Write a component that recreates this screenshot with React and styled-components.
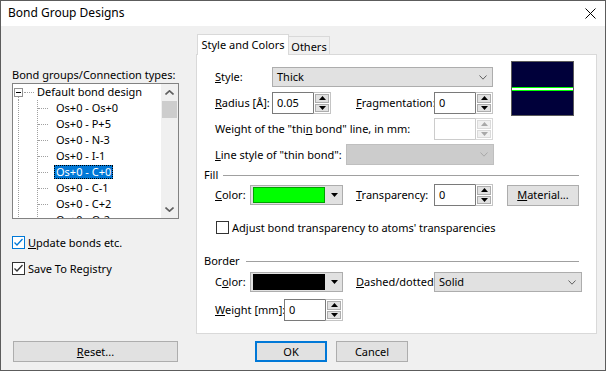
import React from 'react'
import styled, { createGlobalStyle } from 'styled-components'

const GlobalStyle = createGlobalStyle`
  html, body {
    margin: 0;
    padding: 0;
    background: #f0f0f0;
  }
  body {
    font-family: "Segoe UI", "Noto Sans", sans-serif;
    font-size: 11px;
    line-height: 16px;
    color: #000;
  }
`

const treeItems = [
  'Os+0 - Os+0',
  'Os+0 - P+5',
  'Os+0 - N-3',
  'Os+0 - I-1',
  'Os+0 - C+0',
  'Os+0 - C-1',
  'Os+0 - C+2',
  'Os+0 - O-2',
]

const Chevron = ({ up, color = '#606060', w = 9, h = 5, sw = 1 }) => (
  <svg width={w} height={h} viewBox={`0 0 ${w} ${h}`}>
    <polyline
      points={up ? `0.5,${h - 0.5} ${w / 2},0.8 ${w - 0.5},${h - 0.5}` : `0.5,0.5 ${w / 2},${h - 0.8} ${w - 0.5},0.5`}
      fill="none"
      stroke={color}
      strokeWidth={sw}
    />
  </svg>
)

const Tri = ({ up, color = '#000' }) => (
  <svg width="7" height="4" viewBox="0 0 7 4">
    <polygon points={up ? '0,4 3.5,0 7,4' : '0,0 7,0 3.5,4'} fill={color} />
  </svg>
)

const Check = ({ color }) => (
  <svg width="11" height="11" viewBox="0 0 11 11">
    <polyline points="1.5,5.5 4,8 9.5,2" fill="none" stroke={color} strokeWidth="1.3" />
  </svg>
)

const Spin = ({ value, disabled }) => (
  <SpinWrap>
    <SpinField $disabled={disabled}>{value}</SpinField>
    <SpinButtons $disabled={disabled}>
      <SpinButton $disabled={disabled}><Tri up color={disabled ? '#a8a8a8' : '#000'} /></SpinButton>
      <SpinButton $disabled={disabled}><Tri color={disabled ? '#a8a8a8' : '#000'} /></SpinButton>
    </SpinButtons>
  </SpinWrap>
)

const Preview = () => (
  <svg width="63" height="55" viewBox="0 0 63 55">
    <rect x="0.5" y="0.5" width="62" height="54" fill="#00003a" stroke="#5a5a5a" />
    <rect x="1" y="26" width="61" height="4" fill="#00ff00" />
    <rect x="1" y="27" width="61" height="2" fill="#ffffff" />
  </svg>
)

const App = () => {
  return (
    <>
      <GlobalStyle />
      <Window>
        <TitleBar>
          <Title>Bond Group Designs</Title>
          <Close>
            <svg width="11" height="11" viewBox="0 0 11 11">
              <path d="M0.5 0.5 L10.5 10.5 M10.5 0.5 L0.5 10.5" stroke="#000" strokeWidth="1" />
            </svg>
          </Close>
        </TitleBar>
        <Body>
          <LeftColumn>
            <Caption>Bond groups/Connection types:</Caption>
            <TreeBox>
              <TreeList>
                <TreeRow $root>
                  <ExpandBox><Minus /></ExpandBox>
                  <Connector $w={10} />
                  <ItemText $root>Default bond design</ItemText>
                </TreeRow>
                {treeItems.map((t) => (
                  <TreeRow key={t}>
                    <Connector $w={10} />
                    <ItemText $selected={t === 'Os+0 - C+0'}>{t}</ItemText>
                  </TreeRow>
                ))}
              </TreeList>
              <ScrollBar>
                <ScrollArrow><Chevron up w={9} h={5} sw={1.6} /></ScrollArrow>
                <Thumb />
                <ScrollTrack />
                <ScrollArrow><Chevron w={9} h={5} sw={1.6} /></ScrollArrow>
              </ScrollBar>
            </TreeBox>
            <CheckRow $top={17}>
              <Box $focus><Check color="#0078d7" /></Box>
              <span><U>U</U>pdate bonds etc.</span>
            </CheckRow>
            <CheckRow $top={13}>
              <Box><Check color="#333" /></Box>
              <span>Save To Registry</span>
            </CheckRow>
          </LeftColumn>

          <RightColumn>
            <TabsRow>
              <Tab $active $w={92}>Style and Colors</Tab>
              <Tab $w={41}>Others</Tab>
            </TabsRow>
            <Panel>
              <TopSection>
                <Form>
                  <Row $h={20}>
                    <Label $w={57}><U>S</U>tyle:</Label>
                    <Combo $w={221}>
                      <span>Thick</span>
                      <Chevron w={8} h={5} />
                    </Combo>
                  </Row>
                  <Row $h={22} $top={5}>
                    <Label $w={57}><U>R</U>adius [Å]:</Label>
                    <Spin value="0.05" />
                    <Label $w={78} $left={25}><U>F</U>ragmentation:</Label>
                    <Spin value="0" />
                  </Row>
                  <Row $h={22} $top={4}>
                    <Label $w={219}>Weight of the "thi<U>n</U> bond" line, in mm:</Label>
                    <Spin value="" disabled />
                  </Row>
                  <Row $h={21} $top={4}>
                    <Label $w={131}><U>L</U>ine style of "thin bond":</Label>
                    <Combo $w={148} $disabled>
                      <span />
                      <Chevron w={8} h={5} color="#a8a8a8" />
                    </Combo>
                  </Row>
                </Form>
                <PreviewBox>
                  <Preview />
                </PreviewBox>
              </TopSection>

              <Group $top={3}>
                <GroupHeader $gap={5}>
                  <span>Fill</span>
                  <Rule />
                </GroupHeader>
                <GroupBody>
                  <Row $h={22} $top={2}>
                    <Label $w={35}><U>C</U>olor:</Label>
                    <ColorCombo>
                      <Swatch $color="#00ff00" $edge="#00a000" />
                      <Tri />
                    </ColorCombo>
                    <Label $w={78} $left={13}><U>T</U>ransparency:</Label>
                    <Spin value="0" />
                    <Button $w={72} $left={14}><U>M</U>aterial...</Button>
                  </Row>
                  <CheckRow $top={15} $left={1}>
                    <Box />
                    <span>Ad<U>j</U>ust bond transparency to atoms' transparencies</span>
                  </CheckRow>
                </GroupBody>
              </Group>

              <Group $top={20}>
                <GroupHeader $gap={6}>
                  <span>Border</span>
                  <Rule />
                </GroupHeader>
                <GroupBody>
                  <Row $h={20} $top={4}>
                    <Label $w={35}>C<U>o</U>lor:</Label>
                    <ColorCombo>
                      <Swatch $color="#000000" $edge="#000000" />
                      <Tri />
                    </ColorCombo>
                    <Label $w={78} $left={13}><U>D</U>ashed/dotted:</Label>
                    <Combo $w={148}>
                      <span>Solid</span>
                      <Chevron w={8} h={5} />
                    </Combo>
                  </Row>
                  <Row $h={22} $top={7}>
                    <Label $w={69}><U>W</U>eight [mm]:</Label>
                    <Spin value="0" />
                  </Row>
                </GroupBody>
              </Group>
            </Panel>
          </RightColumn>

          <LeftButtons>
            <Button $w={165}><U>R</U>eset...</Button>
          </LeftButtons>
          <RightButtons>
            <Button $w={72} $default>OK</Button>
            <Button $w={72} $left={9}>Cancel</Button>
          </RightButtons>
        </Body>
      </Window>
    </>
  )
}

export default App

const Window = styled.div`
  width: 606px;
  height: 371px;
  box-sizing: border-box;
  border: 1px solid #5c5c5c;
  background: #f0f0f0;
  display: flex;
  flex-direction: column;
  overflow: hidden;
`

const TitleBar = styled.div`
  height: 25px;
  flex: none;
  background: #fff;
  display: flex;
  align-items: center;
  justify-content: space-between;
  padding: 0 9px 0 7px;
`

const Title = styled.div`
  font-size: 12px;
  padding-bottom: 1px;
`

const Close = styled.div`
  width: 11px;
  height: 11px;
  display: flex;
`

const Body = styled.div`
  flex: 1;
  display: grid;
  grid-template-columns: 195px 401px;
  grid-template-rows: 300px 21px;
  row-gap: 7px;
  padding-top: 8px;
`

const LeftColumn = styled.div`
  padding-left: 11px;
  display: flex;
  flex-direction: column;
`

const Caption = styled.div`
  margin-top: 33px;
  line-height: 16px;
`

const TreeBox = styled.div`
  width: 167px;
  height: 136px;
  box-sizing: border-box;
  border: 1px solid #828282;
  background: #fff;
  display: flex;
  overflow: hidden;
`

const TreeList = styled.div`
  flex: 1;
  display: flex;
  flex-direction: column;
`

const dots = 'repeating-linear-gradient(to bottom, #a0a0a0 0 1px, transparent 1px 2px)'

const TreeRow = styled.div`
  height: 16px;
  flex: none;
  display: flex;
  align-items: center;
  padding-left: ${(p) => (p.$root ? 1 : 24)}px;
  background-image: ${(p) => (p.$root ? dots : `${dots}, ${dots}`)};
  background-repeat: no-repeat;
  background-size: ${(p) => (p.$root ? '1px 3px' : '1px 16px, 1px 16px')};
  background-position: ${(p) => (p.$root ? '5px 13px' : '5px 0, 24px 0')};
`

const ExpandBox = styled.span`
  width: 9px;
  height: 9px;
  box-sizing: border-box;
  border: 1px solid #919191;
  background: #fff;
  display: flex;
  align-items: center;
  justify-content: center;
`

const Minus = styled.span`
  width: 5px;
  height: 1px;
  background: #000;
`

const Connector = styled.span`
  width: ${(p) => p.$w}px;
  margin-left: 1px;
  border-top: 1px dotted #a0a0a0;
`

const ItemText = styled.span`
  margin-left: ${(p) => (p.$root ? 1 : 6)}px;
  padding: 0 2px;
  height: 14px;
  line-height: 14px;
  white-space: nowrap;
  box-sizing: border-box;
  background: ${(p) => (p.$selected ? '#0078d7' : 'transparent')};
  color: ${(p) => (p.$selected ? '#fff' : '#000')};
  outline: ${(p) => (p.$selected ? '1px dotted #000' : 'none')};
  outline-offset: -1px;
`

const ScrollBar = styled.div`
  width: 17px;
  flex: none;
  background: #f0f0f0;
  display: flex;
  flex-direction: column;
`

const ScrollArrow = styled.div`
  height: 17px;
  display: flex;
  align-items: center;
  justify-content: center;
`

const Thumb = styled.div`
  height: 17px;
  margin: 0 1px;
  background: #cdcdcd;
`

const ScrollTrack = styled.div`
  flex: 1;
`

const CheckRow = styled.label`
  display: flex;
  align-items: center;
  gap: 3px;
  height: 13px;
  margin-top: ${(p) => p.$top || 0}px;
  margin-left: ${(p) => p.$left || 0}px;
  line-height: 13px;
  white-space: nowrap;
`

const Box = styled.span`
  width: 13px;
  height: 13px;
  flex: none;
  box-sizing: border-box;
  border: 1px solid ${(p) => (p.$focus ? '#0078d7' : '#333')};
  background: #fff;
  display: flex;
  align-items: center;
  justify-content: center;
`

const U = styled.span`
  text-decoration: underline;
`

const RightColumn = styled.div`
  display: flex;
  flex-direction: column;
`

const TabsRow = styled.div`
  height: 20px;
  display: flex;
  align-items: flex-end;
  padding-left: 1px;
`

const Tab = styled.div`
  position: relative;
  z-index: ${(p) => (p.$active ? 1 : 0)};
  box-sizing: border-box;
  width: ${(p) => p.$w}px;
  height: ${(p) => (p.$active ? 21 : 18)}px;
  margin-bottom: ${(p) => (p.$active ? -1 : 0)}px;
  padding-top: 1px;
  text-align: center;
  background: ${(p) => (p.$active ? '#fff' : '#f0f0f0')};
  border: 1px solid #d9d9d9;
  border-bottom: none;
  border-left: ${(p) => (p.$active ? '1px solid #d9d9d9' : 'none')};
  white-space: nowrap;
  line-height: 17px;
`

const Panel = styled.div`
  height: 280px;
  box-sizing: border-box;
  border: 1px solid #d9d9d9;
  background: #fff;
`

const TopSection = styled.div`
  display: flex;
  padding: 6px 0 0 18px;
`

const Form = styled.div`
  width: 279px;
  padding-top: 6px;
  display: flex;
  flex-direction: column;
`

const PreviewBox = styled.div`
  margin-left: 17px;
  width: 63px;
  height: 55px;
  display: flex;
`

const Row = styled.div`
  display: flex;
  align-items: center;
  height: ${(p) => p.$h}px;
  margin-top: ${(p) => p.$top || 0}px;
`

const Label = styled.span`
  flex: none;
  width: ${(p) => p.$w}px;
  margin-left: ${(p) => p.$left || 0}px;
  white-space: nowrap;
`

const Combo = styled.div`
  flex: none;
  width: ${(p) => p.$w}px;
  height: 100%;
  max-height: 21px;
  box-sizing: border-box;
  display: flex;
  align-items: center;
  justify-content: space-between;
  padding: 0 5px 0 4px;
  background: ${(p) => (p.$disabled ? '#cccccc' : '#e1e1e1')};
  border: 1px solid ${(p) => (p.$disabled ? '#bfbfbf' : '#adadad')};
`

const ColorCombo = styled.div`
  flex: none;
  width: 93px;
  height: 20px;
  box-sizing: border-box;
  display: flex;
  align-items: center;
  gap: 6px;
  padding: 0 0 0 2px;
  background: #e1e1e1;
  border: 1px solid #adadad;
`

const Swatch = styled.span`
  width: 72px;
  height: 16px;
  box-sizing: border-box;
  background: ${(p) => p.$color};
  border: 1px solid ${(p) => p.$edge};
`

const SpinWrap = styled.div`
  flex: none;
  width: 59px;
  height: 22px;
  display: flex;
`

const SpinField = styled.div`
  flex: 1;
  box-sizing: border-box;
  border: 1px solid ${(p) => (p.$disabled ? '#cccccc' : '#7a7a7a')};
  border-right: none;
  padding: 2px 0 0 4px;
  line-height: 16px;
  background: #fff;
`

const SpinButtons = styled.div`
  width: 18px;
  box-sizing: border-box;
  display: flex;
  flex-direction: column;
  gap: 1px;
  padding: 1px;
  border: 1px solid ${(p) => (p.$disabled ? '#d8d8d8' : '#c4c4c4')};
  border-left: 1px solid ${(p) => (p.$disabled ? '#cccccc' : '#7a7a7a')};
  background: #fff;
`

const SpinButton = styled.div`
  flex: 1;
  box-sizing: border-box;
  border: 1px solid ${(p) => (p.$disabled ? '#dadada' : '#adadad')};
  background: ${(p) => (p.$disabled ? '#f0f0f0' : '#e1e1e1')};
  display: flex;
  align-items: center;
  justify-content: center;
`

const Group = styled.div`
  margin-top: ${(p) => p.$top}px;
  padding: 0 17px 0 7px;
`

const GroupHeader = styled.div`
  height: 14px;
  display: flex;
  align-items: center;
  gap: ${(p) => p.$gap}px;
  line-height: 14px;
`

const Rule = styled.span`
  flex: 1;
  height: 1px;
  background: #a0a0a0;
`

const GroupBody = styled.div`
  padding-left: 11px;
  display: flex;
  flex-direction: column;
`

const Button = styled.div`
  flex: none;
  width: ${(p) => p.$w}px;
  height: 21px;
  margin-left: ${(p) => p.$left || 0}px;
  box-sizing: border-box;
  display: flex;
  align-items: center;
  justify-content: center;
  background: #e1e1e1;
  border: ${(p) => (p.$default ? '2px solid #0078d7' : '1px solid #adadad')};
`

const LeftButtons = styled.div`
  padding-left: 12px;
  display: flex;
`

const RightButtons = styled.div`
  padding-left: 59px;
  display: flex;
`
